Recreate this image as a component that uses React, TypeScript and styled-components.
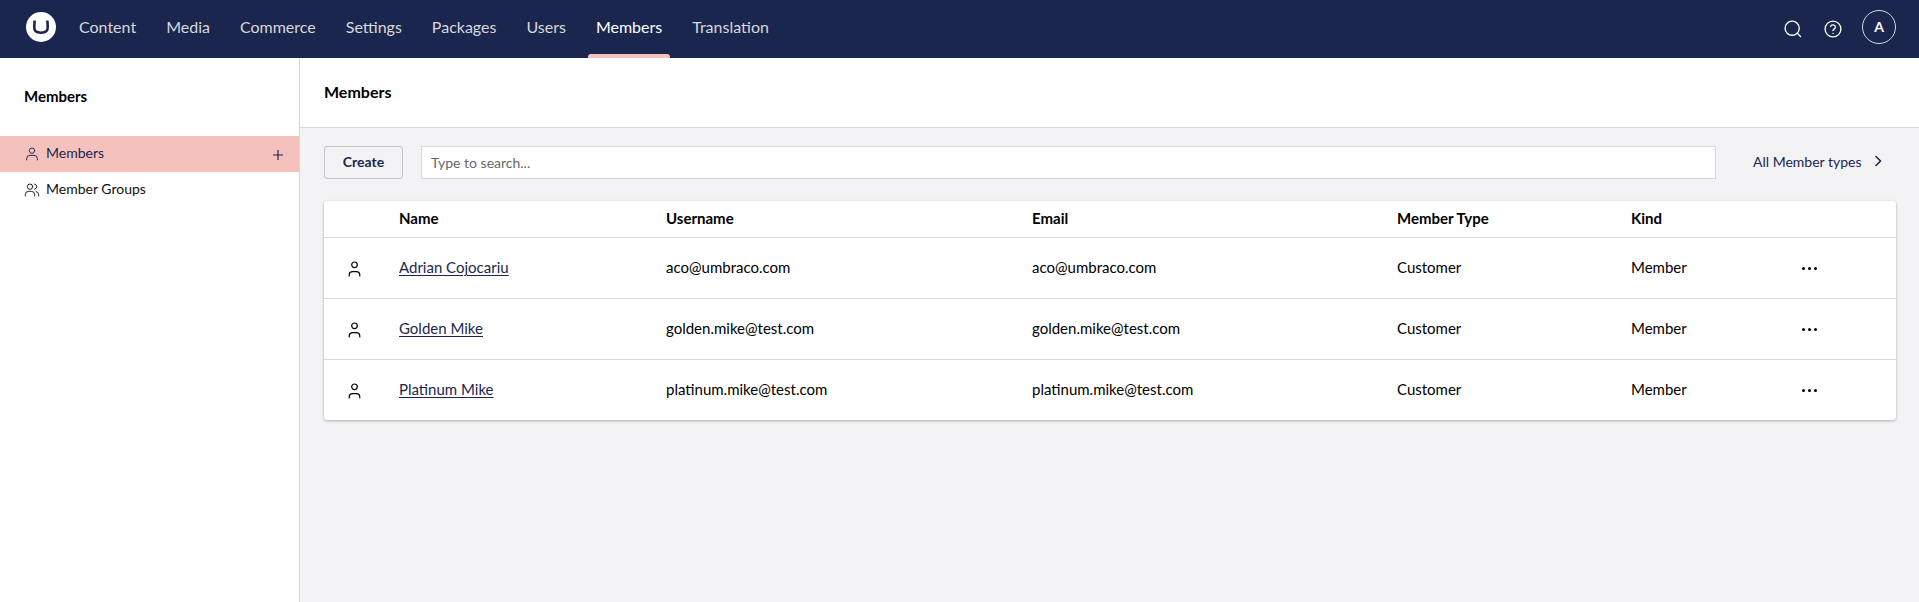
import React from "react";
import styled, { createGlobalStyle } from "styled-components";

const Global = createGlobalStyle`
  html, body { margin: 0; padding: 0; height: 100%; }
  body { font-family: Lato, "Liberation Sans", sans-serif; font-size: 15px; color: #000; background: #f3f3f5; }
  #root { height: 100vh; }
  * { box-sizing: border-box; }
`;

const Page = styled.div`
  display: flex;
  flex-direction: column;
  height: 100vh;
  overflow: hidden;
`;
const TopBar = styled.header`
  height: 58px;
  flex: none;
  background: #1b264f;
  display: flex;
  align-items: center;
  padding: 0 23px 0 25px;
`;
const Logo = styled.svg`
  width: 32px;
  height: 32px;
  margin-right: 7px;
  margin-bottom: 4px;
  flex: none;
`;
const Nav = styled.nav`
  display: flex;
  height: 100%;
`;
const NavItem = styled.div<{ $active?: boolean }>`
  position: relative;
  display: flex;
  align-items: center;
  padding: 0 15px 5px;
  font-size: 16px;
  color: ${(p) => (p.$active ? "#ffffff" : "#d8d7d9")};
  ${(p) =>
    p.$active &&
    `&::after { content: ""; position: absolute; left: 7px; right: 7px; bottom: 0; height: 4px; background: #f5c1bc; border-radius: 3px 3px 0 0; }`}
`;
const TopActions = styled.div`
  margin-left: auto;
  display: flex;
  align-items: center;
  padding-bottom: 1px;
`;
const TopIcon = styled.svg`
  width: 20px;
  height: 20px;
  fill: none;
  stroke: #fff;
  stroke-width: 1.6;
  stroke-linecap: round;
  stroke-linejoin: round;
  margin-right: 20px;
`;
const Avatar = styled.div`
  width: 34px;
  height: 34px;
  border: 1px solid #d8d7d9;
  border-radius: 50%;
  color: #fff;
  font-weight: 700;
  font-size: 14px;
  display: flex;
  align-items: center;
  justify-content: center;
  margin-left: -1px;
  margin-bottom: 3px;
  padding-bottom: 2px;
`;
const Body = styled.div`
  flex: 1;
  display: flex;
  min-height: 0;
`;
const Sidebar = styled.aside`
  width: 300px;
  flex: none;
  background: #fff;
  border-right: 1px solid #d8d7d9;
`;
const SideTitle = styled.div`
  font-weight: 700;
  font-size: 15px;
  padding: 29px 24px 0;
  height: 78px;
  line-height: 18px;
`;
const SideItem = styled.div<{ $active?: boolean }>`
  height: 36px;
  display: flex;
  align-items: center;
  padding: 0 14px 0 24px;
  font-size: 14px;
  color: ${(p) => (p.$active ? "#1b264f" : "#101010")};
  background: ${(p) => (p.$active ? "#f5c1bc" : "transparent")};
`;
const SideIcon = styled.svg`
  width: 16px;
  height: 16px;
  fill: none;
  stroke: currentColor;
  stroke-width: 1.4;
  stroke-linecap: round;
  stroke-linejoin: round;
  margin-right: 6px;
  flex: none;
`;
const SideLabel = styled.span`
  flex: 1;
  padding-bottom: 4px;
`;
const Plus = styled.svg`
  width: 14px;
  height: 14px;
  stroke: currentColor;
  stroke-width: 1.2;
  fill: none;
  margin-top: 2px;
`;
const Main = styled.main`
  flex: 1;
  min-width: 0;
  display: flex;
  flex-direction: column;
`;
const MainHeader = styled.div`
  height: 70px;
  flex: none;
  background: #fff;
  border-bottom: 1px solid #d8d7d9;
  font-weight: 700;
  font-size: 16px;
  padding: 25px 24px 0;
  line-height: 18px;
`;
const Content = styled.div`
  padding: 18px 23px 0 24px;
`;
const Toolbar = styled.div`
  display: flex;
  align-items: center;
  height: 33px;
  margin-bottom: 22px;
`;
const CreateButton = styled.button`
  width: 79px;
  height: 33px;
  border: 1px solid #c4c4c4;
  border-radius: 3px;
  background: #f3f3f5;
  font: 700 14px Lato, sans-serif;
  color: #1b264f;
  margin-right: 18px;
  padding: 0 0 2px;
`;
const Search = styled.input`
  flex: 1;
  height: 33px;
  border: 1px solid #d8d7d9;
  background: #fff;
  padding: 0 9px;
  font: 14px Lato, sans-serif;
  outline: none;
  &::placeholder { color: #68676b; opacity: 1; }
`;
const Filter = styled.div`
  display: flex;
  align-items: center;
  flex: none;
  width: 180px;
  padding: 0 0 3px 37px;
  font-size: 14px;
  color: #1b264f;
  white-space: nowrap;
`;
const Chevron = styled.svg`
  width: 12px;
  height: 12px;
  fill: none;
  stroke: currentColor;
  stroke-width: 1.6;
  stroke-linecap: round;
  stroke-linejoin: round;
  margin-left: 10px;
  flex: none;
`;
const Table = styled.div`
  background: #fff;
  border-radius: 3px;
  box-shadow: 0 1px 3px rgba(0, 0, 0, 0.3);
`;
const Row = styled.div<{ $head?: boolean }>`
  display: grid;
  grid-template-columns: 75px 267px 366px 365px 234px 1fr;
  align-items: center;
  height: ${(p) => (p.$head ? "37px" : "61px")};
  border-bottom: 1px solid #d8d7d9;
  font-size: 15px;
  font-weight: ${(p) => (p.$head ? 700 : 400)};
  color: #000;
  padding-bottom: 2px;
  &:last-child { border-bottom: 0; height: 60px; }
`;
const IconCell = styled.div`
  padding-left: 24px;
  display: flex;
  padding-top: 3px;
`;
const RowIcon = styled.svg`
  width: 14px;
  height: 16px;
  fill: none;
  stroke: #000;
  stroke-width: 1.2;
  stroke-linecap: round;
`;
const NameLink = styled.a`
  color: #1b264f;
  text-decoration: underline;
  text-underline-offset: 2px;
  text-decoration-thickness: 1px;
`;
const KindCell = styled.div`
  display: flex;
  align-items: center;
  min-width: 0;
`;
const KindLabel = styled.span`
  width: 0;
  white-space: nowrap;
`;
const Actions = styled.div`
  padding-left: 171px;
  padding-top: 3px;
  display: flex;
  gap: 3px;
`;
const Dot = styled.i`
  width: 3px;
  height: 3px;
  border-radius: 50%;
  background: #000;
`;

const Person = () => (
  <SideIcon viewBox="0 0 24 24">
    <circle cx="12" cy="7" r="4" />
    <path d="M4 21v-2a5 5 0 0 1 5-5h6a5 5 0 0 1 5 5v2" />
  </SideIcon>
);
const People = () => (
  <SideIcon viewBox="0 0 24 24">
    <circle cx="9" cy="7" r="4" />
    <path d="M2 21v-2a5 5 0 0 1 5-5h4a5 5 0 0 1 5 5v2" />
    <path d="M16 3.100a4 4 0 0 1 0 7.800" />
    <path d="M22 21v-2a5 5 0 0 0-4-4.800" />
  </SideIcon>
);

function Kind() {
  return (
    <KindCell>
      <KindLabel>Member</KindLabel>
      <Actions>
        <Dot /><Dot /><Dot />
      </Actions>
    </KindCell>
  );
}

const members = [
  { name: "Adrian Cojocariu", email: "aco@umbraco.com" },
  { name: "Golden Mike", email: "golden.mike@test.com" },
  { name: "Platinum Mike", email: "platinum.mike@test.com" },
];
const navItems = ["Content", "Media", "Commerce", "Settings", "Packages", "Users", "Members", "Translation"];

export default function App() {
  return (
    <Page>
      <Global />
      <TopBar>
        <Logo viewBox="0 0 32 32">
          <circle cx="16" cy="16" r="15" fill="#fff" />
          <path d="M9.600 9.500 9.300 16c-.2 4 1.600 5.700 6.700 5.700s6.900-1.700 6.700-5.700L22.400 9.500" fill="none" stroke="#1b264f" strokeWidth="2.600" />
        </Logo>
        <Nav>
          {navItems.map((n) => (
            <NavItem key={n} $active={n === "Members"}>{n}</NavItem>
          ))}
        </Nav>
        <TopActions>
          <TopIcon viewBox="0 0 24 24">
            <circle cx="11" cy="11" r="8.500" />
            <path d="m21 21-3.800-3.800" />
          </TopIcon>
          <TopIcon viewBox="0 0 24 24">
            <circle cx="12" cy="12" r="9.500" />
            <path d="M9.100 9a3 3 0 0 1 5.800 1c0 2-3 2.600-3 3.800" />
            <path d="M12 17.300h.01" />
          </TopIcon>
          <Avatar>A</Avatar>
        </TopActions>
      </TopBar>
      <Body>
        <Sidebar>
          <SideTitle>Members</SideTitle>
          <SideItem $active>
            <Person />
            <SideLabel>Members</SideLabel>
            <Plus viewBox="0 0 14 14"><path d="M2 7h10M7 2v10" /></Plus>
          </SideItem>
          <SideItem>
            <People />
            <SideLabel>Member Groups</SideLabel>
          </SideItem>
        </Sidebar>
        <Main>
          <MainHeader>Members</MainHeader>
          <Content>
            <Toolbar>
              <CreateButton>Create</CreateButton>
              <Search placeholder="Type to search..." readOnly />
              <Filter>
                All Member types
                <Chevron viewBox="0 0 12 12"><path d="m4 1.500 4.500 4.500L4 10.500" /></Chevron>
              </Filter>
            </Toolbar>
            <Table>
              <Row $head>
                <div />
                <div>Name</div>
                <div>Username</div>
                <div>Email</div>
                <div>Member Type</div>
                <div>Kind</div>
              </Row>
              {members.map((m) => (
                <Row key={m.name}>
                  <IconCell>
                    <RowIcon viewBox="0 0 14 16">
                      <circle cx="6.500" cy="3.800" r="2.800" />
                      <path d="M1.200 15v-.8a3.500 3.500 0 0 1 3.500-3.500h3.600a3.500 3.500 0 0 1 3.500 3.500v.8" />
                    </RowIcon>
                  </IconCell>
                  <div><NameLink>{m.name}</NameLink></div>
                  <div>{m.email}</div>
                  <div>{m.email}</div>
                  <div>Customer</div>
                  <Kind />
                </Row>
              ))}
            </Table>
          </Content>
        </Main>
      </Body>
    </Page>
  );
}
